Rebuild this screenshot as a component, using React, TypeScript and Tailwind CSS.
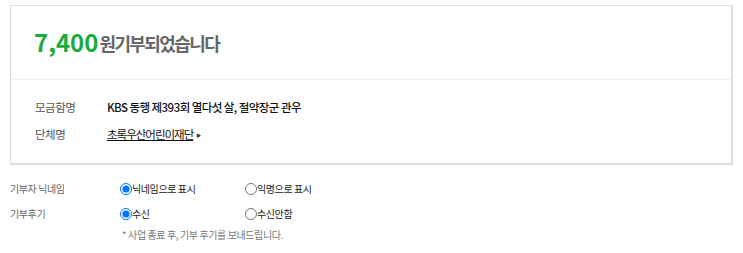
import { useState } from 'react'

export default function App() {
  const [nick, setNick] = useState('nick')
  const [review, setReview] = useState('yes')

  return (
    <div
      className="w-[743px] h-[253px] bg-white pt-[5px] px-[10px]"
      style={{ fontFamily: '"Noto Sans CJK KR", "Noto Sans", sans-serif' }}
    >
      {/* Summary box */}
      <div className="w-[723px] h-[160px] border border-[#dcdcdc] border-r-2 border-b-2 flex flex-col">
        <div className="h-[74px] flex items-center pl-[23px] pb-[2px] border-b border-[#efefef]">
          <span className="text-[24px] font-bold text-[#1aab3c] tracking-[0px] leading-none">7,400</span>
          <span className="text-[18px] font-bold text-[#666] tracking-[-1.6px] leading-none ml-[1px] mt-[2px]">원기부되었습니다</span>
        </div>
        <div className="flex flex-col pl-[24px] pt-[18px] gap-[8px] text-[11.5px] leading-[19px]">
          <div className="flex">
            <span className="w-[72px] text-[#555] tracking-[-0.5px]">모금함명</span>
            <span className="text-[#111] font-medium tracking-[-0.55px]">KBS 동행 제393회 열다섯 살, 절약장군 관우</span>
          </div>
          <div className="flex">
            <span className="w-[72px] text-[#555] tracking-[-0.5px]">단체명</span>
            <span className="text-[#111] underline tracking-[-1px]">초록우산어린이재단</span>
            <span className="text-[5px] text-[#333] ml-[3px] leading-[19px]">▶</span>
          </div>
        </div>
      </div>

      {/* Options */}
      <div className="flex flex-col pt-[11px] text-[10px] text-[#666] leading-[16px] tracking-[-0.4px]">
        <div className="flex items-center h-[25px]">
          <span className="w-[110px]">기부자 닉네임</span>
          <label className="w-[125px] flex items-center text-[#222]">
            <input type="radio" name="nick" checked={nick === 'nick'} onChange={() => setNick('nick')} className="m-0 w-[12px] h-[12px]" />
            <span>닉네임으로 표시</span>
          </label>
          <label className="flex items-center text-[#222]">
            <input type="radio" name="nick" checked={nick === 'anon'} onChange={() => setNick('anon')} className="m-0 w-[12px] h-[12px]" />
            <span>익명으로 표시</span>
          </label>
        </div>
        <div className="flex items-center h-[25px]">
          <span className="w-[110px]">기부후기</span>
          <label className="w-[125px] flex items-center text-[#222]">
            <input type="radio" name="review" checked={review === 'yes'} onChange={() => setReview('yes')} className="m-0 w-[12px] h-[12px]" />
            <span>수신</span>
          </label>
          <label className="flex items-center text-[#222]">
            <input type="radio" name="review" checked={review === 'no'} onChange={() => setReview('no')} className="m-0 w-[12px] h-[12px]" />
            <span>수신안함</span>
          </label>
        </div>
        <div className="pl-[112px] pt-[1px] text-[10px] text-[#777]">* 사업 종료 후, 기부 후기를 보내드립니다.</div>
      </div>
    </div>
  )
}
